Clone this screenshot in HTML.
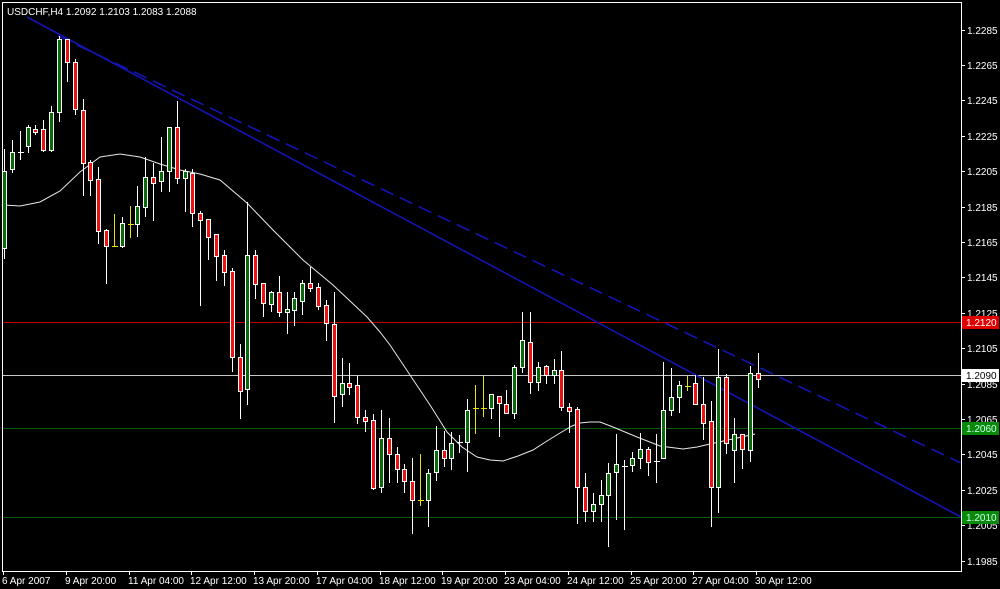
<!DOCTYPE html>
<html><head><meta charset="utf-8"><style>
html,body{margin:0;padding:0;background:#000;width:1000px;height:589px;overflow:hidden}
svg{display:block}
text{font-family:"Liberation Sans",sans-serif;font-size:10px;fill:#fff}
</style></head><body>
<svg width="1000" height="589" viewBox="0 0 1000 589" xmlns="http://www.w3.org/2000/svg">
<rect width="1000" height="589" fill="#000"/>
<!-- horizontal lines -->
<line x1="3" y1="322.5" x2="961" y2="322.5" stroke="#c00000" stroke-width="1"/>
<line x1="3" y1="375.5" x2="961" y2="375.5" stroke="#c8c8c8" stroke-width="1"/>
<line x1="3" y1="428.5" x2="961" y2="428.5" stroke="#0a5a0a" stroke-width="1"/>
<line x1="3" y1="517.5" x2="961" y2="517.5" stroke="#0a5a0a" stroke-width="1"/>
<!-- trend lines -->
<line x1="27" y1="17" x2="961" y2="517" stroke="#1414b4" stroke-width="1.6"/>
<line x1="58" y1="36" x2="961" y2="463" stroke="#1414b4" stroke-width="1.6" stroke-dasharray="14,7"/>
<!-- MA -->
<polyline fill="none" stroke="#e8e8e8" stroke-width="1" points="3,205 20,206 40,202 60,191 80,172 100,157 120,154 140,157 160,164 180,170 200,174 220,180 247,203 273,230 303,260 333,285 367,317 380,332 390,345 410,375 430,405 447,432 462,447 477,457 490,460 503,461 518,456 533,450 547,441 560,433 572,426 580,423 590,422 600,422 613,427 625,432 637,437 660,446 683,449 697,447 710,444 737,438 755,434"/>
<g shape-rendering="crispEdges" stroke-width="1">
<g stroke="#fff">
<line x1="4.5" y1="149" x2="4.5" y2="259"/><line x1="12.5" y1="140" x2="12.5" y2="173"/><line x1="20.5" y1="131" x2="20.5" y2="160"/><line x1="28.5" y1="125" x2="28.5" y2="153"/><line x1="35.5" y1="125" x2="35.5" y2="135"/><line x1="43.5" y1="120" x2="43.5" y2="152"/><line x1="51.5" y1="106" x2="51.5" y2="152"/><line x1="59.5" y1="36" x2="59.5" y2="122"/><line x1="67.5" y1="39" x2="67.5" y2="82"/><line x1="75.5" y1="59" x2="75.5" y2="115"/><line x1="83.5" y1="99" x2="83.5" y2="196"/><line x1="90.5" y1="160" x2="90.5" y2="196"/><line x1="98.5" y1="167" x2="98.5" y2="244"/><line x1="106.5" y1="229" x2="106.5" y2="284"/><line x1="122.5" y1="217" x2="122.5" y2="248"/><line x1="137.5" y1="186" x2="137.5" y2="237"/><line x1="145.5" y1="157" x2="145.5" y2="217"/><line x1="153.5" y1="163" x2="153.5" y2="221"/><line x1="161.5" y1="137" x2="161.5" y2="192"/><line x1="169.5" y1="127" x2="169.5" y2="192"/><line x1="177.5" y1="101" x2="177.5" y2="184"/><line x1="185.5" y1="169" x2="185.5" y2="212"/><line x1="192.5" y1="169" x2="192.5" y2="227"/><line x1="200.5" y1="211" x2="200.5" y2="306"/><line x1="208.5" y1="219" x2="208.5" y2="260"/><line x1="216.5" y1="234" x2="216.5" y2="281"/><line x1="224.5" y1="250" x2="224.5" y2="286"/><line x1="232.5" y1="268" x2="232.5" y2="372"/><line x1="240.5" y1="344" x2="240.5" y2="419"/><line x1="247.5" y1="202" x2="247.5" y2="405"/><line x1="255.5" y1="250" x2="255.5" y2="299"/><line x1="263.5" y1="283" x2="263.5" y2="317"/><line x1="271.5" y1="291" x2="271.5" y2="312"/><line x1="279.5" y1="276" x2="279.5" y2="317"/><line x1="287.5" y1="292" x2="287.5" y2="334"/><line x1="294.5" y1="292" x2="294.5" y2="326"/><line x1="302.5" y1="280" x2="302.5" y2="315"/><line x1="310.5" y1="267" x2="310.5" y2="292"/><line x1="318.5" y1="283" x2="318.5" y2="310"/><line x1="326.5" y1="300" x2="326.5" y2="341"/><line x1="334.5" y1="292" x2="334.5" y2="423"/><line x1="342.5" y1="358" x2="342.5" y2="407"/><line x1="349.5" y1="363" x2="349.5" y2="395"/><line x1="357.5" y1="376" x2="357.5" y2="424"/><line x1="365.5" y1="410" x2="365.5" y2="432"/><line x1="373.5" y1="414" x2="373.5" y2="490"/><line x1="381.5" y1="410" x2="381.5" y2="493"/><line x1="389.5" y1="418" x2="389.5" y2="483"/><line x1="397.5" y1="447" x2="397.5" y2="483"/><line x1="404.5" y1="464" x2="404.5" y2="493"/><line x1="412.5" y1="458" x2="412.5" y2="534"/><line x1="428.5" y1="469" x2="428.5" y2="527"/><line x1="436.5" y1="426" x2="436.5" y2="481"/><line x1="444.5" y1="431" x2="444.5" y2="467"/><line x1="451.5" y1="432" x2="451.5" y2="470"/><line x1="459.5" y1="435" x2="459.5" y2="453"/><line x1="467.5" y1="399" x2="467.5" y2="472"/><line x1="491.5" y1="394" x2="491.5" y2="419"/><line x1="499.5" y1="396" x2="499.5" y2="437"/><line x1="506.5" y1="390" x2="506.5" y2="413"/><line x1="514.5" y1="365" x2="514.5" y2="419"/><line x1="522.5" y1="312" x2="522.5" y2="373"/><line x1="530.5" y1="312" x2="530.5" y2="394"/><line x1="538.5" y1="362" x2="538.5" y2="391"/><line x1="546.5" y1="365" x2="546.5" y2="384"/><line x1="554.5" y1="359" x2="554.5" y2="384"/><line x1="561.5" y1="351" x2="561.5" y2="411"/><line x1="569.5" y1="403" x2="569.5" y2="433"/><line x1="577.5" y1="407" x2="577.5" y2="524"/><line x1="585.5" y1="473" x2="585.5" y2="522"/><line x1="593.5" y1="493" x2="593.5" y2="522"/><line x1="601.5" y1="480" x2="601.5" y2="522"/><line x1="608.5" y1="463" x2="608.5" y2="547"/><line x1="616.5" y1="434" x2="616.5" y2="520"/><line x1="624.5" y1="460" x2="624.5" y2="530"/><line x1="632.5" y1="452" x2="632.5" y2="472"/><line x1="640.5" y1="433" x2="640.5" y2="469"/><line x1="648.5" y1="447" x2="648.5" y2="476"/><line x1="656.5" y1="434" x2="656.5" y2="483"/><line x1="663.5" y1="362" x2="663.5" y2="458"/><line x1="671.5" y1="368" x2="671.5" y2="416"/><line x1="679.5" y1="381" x2="679.5" y2="413"/><line x1="695.5" y1="375" x2="695.5" y2="404"/><line x1="703.5" y1="377" x2="703.5" y2="440"/><line x1="711.5" y1="401" x2="711.5" y2="527"/><line x1="718.5" y1="349" x2="718.5" y2="513"/><line x1="726.5" y1="374" x2="726.5" y2="454"/><line x1="734.5" y1="418" x2="734.5" y2="483"/><line x1="742.5" y1="434" x2="742.5" y2="469"/><line x1="750.5" y1="366" x2="750.5" y2="462"/><line x1="758.5" y1="353" x2="758.5" y2="388"/>
</g>
<g stroke="#e6e600">
<line x1="114.5" y1="214" x2="114.5" y2="246"/><line x1="130.5" y1="206" x2="130.5" y2="238"/><line x1="420.5" y1="454" x2="420.5" y2="506"/><line x1="475.5" y1="385" x2="475.5" y2="434"/><line x1="483.5" y1="376" x2="483.5" y2="417"/><line x1="687.5" y1="376" x2="687.5" y2="391"/>
<line x1="112" y1="246.5" x2="118" y2="246.5"/><line x1="128" y1="224.5" x2="134" y2="224.5"/><line x1="418" y1="500.5" x2="424" y2="500.5"/><line x1="473" y1="408.5" x2="479" y2="408.5"/><line x1="481" y1="408.5" x2="487" y2="408.5"/><line x1="685" y1="386.5" x2="691" y2="386.5"/>
</g>
<g stroke="#fff">
<line x1="18" y1="152.5" x2="24" y2="152.5"/><line x1="457" y1="442.5" x2="463" y2="442.5"/><line x1="622" y1="466.5" x2="628" y2="466.5"/><line x1="654" y1="461.5" x2="660" y2="461.5"/>
</g>
<g stroke="#fff" fill="#0a6a0a">
<rect x="2.5" y="171.5" width="4" height="77"/><rect x="10.5" y="152.5" width="4" height="17"/><rect x="26.5" y="127.5" width="4" height="19"/><rect x="49.5" y="112.5" width="4" height="38"/><rect x="57.5" y="39.5" width="4" height="73"/><rect x="120.5" y="223.5" width="4" height="23"/><rect x="135.5" y="206.5" width="4" height="18"/><rect x="143.5" y="177.5" width="4" height="30"/><rect x="159.5" y="171.5" width="4" height="10"/><rect x="167.5" y="127.5" width="4" height="44"/><rect x="183.5" y="171.5" width="4" height="7"/><rect x="245.5" y="255.5" width="4" height="134"/><rect x="269.5" y="292.5" width="4" height="12"/><rect x="285.5" y="309.5" width="4" height="3"/><rect x="292.5" y="298.5" width="4" height="12"/><rect x="300.5" y="283.5" width="4" height="18"/><rect x="340.5" y="383.5" width="4" height="11"/><rect x="379.5" y="438.5" width="4" height="49"/><rect x="426.5" y="473.5" width="4" height="27"/><rect x="434.5" y="450.5" width="4" height="22"/><rect x="449.5" y="443.5" width="4" height="15"/><rect x="465.5" y="410.5" width="4" height="32"/><rect x="489.5" y="394.5" width="4" height="14"/><rect x="512.5" y="367.5" width="4" height="46"/><rect x="520.5" y="340.5" width="4" height="27"/><rect x="536.5" y="367.5" width="4" height="15"/><rect x="552.5" y="370.5" width="4" height="5"/><rect x="591.5" y="504.5" width="4" height="7"/><rect x="599.5" y="495.5" width="4" height="9"/><rect x="606.5" y="473.5" width="4" height="22"/><rect x="614.5" y="464.5" width="4" height="8"/><rect x="630.5" y="458.5" width="4" height="7"/><rect x="638.5" y="449.5" width="4" height="9"/><rect x="661.5" y="410.5" width="4" height="48"/><rect x="669.5" y="397.5" width="4" height="13"/><rect x="677.5" y="385.5" width="4" height="12"/><rect x="716.5" y="377.5" width="4" height="110"/><rect x="732.5" y="434.5" width="4" height="16"/><rect x="748.5" y="373.5" width="4" height="77"/>
</g>
<g stroke="#fff" fill="#ee1111">
<rect x="33.5" y="129.5" width="4" height="3"/><rect x="41.5" y="129.5" width="4" height="21"/><rect x="65.5" y="39.5" width="4" height="23"/><rect x="73.5" y="62.5" width="4" height="47"/><rect x="81.5" y="110.5" width="4" height="53"/><rect x="88.5" y="162.5" width="4" height="18"/><rect x="96.5" y="179.5" width="4" height="52"/><rect x="104.5" y="230.5" width="4" height="16"/><rect x="151.5" y="177.5" width="4" height="6"/><rect x="175.5" y="127.5" width="4" height="51"/><rect x="190.5" y="173.5" width="4" height="40"/><rect x="198.5" y="213.5" width="4" height="7"/><rect x="206.5" y="219.5" width="4" height="18"/><rect x="214.5" y="234.5" width="4" height="22"/><rect x="222.5" y="255.5" width="4" height="17"/><rect x="230.5" y="271.5" width="4" height="86"/><rect x="238.5" y="357.5" width="4" height="34"/><rect x="253.5" y="255.5" width="4" height="29"/><rect x="261.5" y="283.5" width="4" height="20"/><rect x="277.5" y="292.5" width="4" height="20"/><rect x="308.5" y="283.5" width="4" height="5"/><rect x="316.5" y="287.5" width="4" height="19"/><rect x="324.5" y="305.5" width="4" height="18"/><rect x="332.5" y="324.5" width="4" height="72"/><rect x="347.5" y="383.5" width="4" height="4"/><rect x="355.5" y="385.5" width="4" height="32"/><rect x="363.5" y="417.5" width="4" height="4"/><rect x="371.5" y="420.5" width="4" height="68"/><rect x="387.5" y="438.5" width="4" height="16"/><rect x="395.5" y="454.5" width="4" height="15"/><rect x="402.5" y="469.5" width="4" height="12"/><rect x="410.5" y="481.5" width="4" height="19"/><rect x="442.5" y="450.5" width="4" height="8"/><rect x="497.5" y="396.5" width="4" height="7"/><rect x="504.5" y="404.5" width="4" height="9"/><rect x="528.5" y="342.5" width="4" height="40"/><rect x="544.5" y="366.5" width="4" height="9"/><rect x="559.5" y="370.5" width="4" height="37"/><rect x="567.5" y="407.5" width="4" height="4"/><rect x="575.5" y="409.5" width="4" height="78"/><rect x="583.5" y="487.5" width="4" height="24"/><rect x="646.5" y="449.5" width="4" height="13"/><rect x="693.5" y="383.5" width="4" height="21"/><rect x="701.5" y="404.5" width="4" height="19"/><rect x="709.5" y="421.5" width="4" height="66"/><rect x="724.5" y="377.5" width="4" height="66"/><rect x="740.5" y="434.5" width="4" height="15"/><rect x="756.5" y="373.5" width="4" height="6"/>
</g>
</g>
<!-- frame -->
<rect x="2.5" y="2.5" width="959" height="569" fill="none" stroke="#fff" stroke-width="1"/>
<text x="7" y="15">USDCHF,H4  1.2092 1.2103 1.2083 1.2088</text>
<!-- right axis ticks & labels -->
<g stroke="#fff">
<line x1="962" y1="30.5" x2="965" y2="30.5"/><line x1="962" y1="65.5" x2="965" y2="65.5"/><line x1="962" y1="100.5" x2="965" y2="100.5"/><line x1="962" y1="136.5" x2="965" y2="136.5"/><line x1="962" y1="171.5" x2="965" y2="171.5"/><line x1="962" y1="207.5" x2="965" y2="207.5"/><line x1="962" y1="242.5" x2="965" y2="242.5"/><line x1="962" y1="277.5" x2="965" y2="277.5"/><line x1="962" y1="313.5" x2="965" y2="313.5"/><line x1="962" y1="348.5" x2="965" y2="348.5"/><line x1="962" y1="384.5" x2="965" y2="384.5"/><line x1="962" y1="419.5" x2="965" y2="419.5"/><line x1="962" y1="454.5" x2="965" y2="454.5"/><line x1="962" y1="490.5" x2="965" y2="490.5"/><line x1="962" y1="525.5" x2="965" y2="525.5"/><line x1="962" y1="561.5" x2="965" y2="561.5"/>
</g>
<text x="967" y="34">1.2285</text><text x="967" y="69">1.2265</text><text x="967" y="104">1.2245</text><text x="967" y="140">1.2225</text><text x="967" y="175">1.2205</text><text x="967" y="211">1.2185</text><text x="967" y="246">1.2165</text><text x="967" y="281">1.2145</text><text x="967" y="317">1.2125</text><text x="967" y="352">1.2105</text><text x="967" y="388">1.2085</text><text x="967" y="423">1.2065</text><text x="967" y="458">1.2045</text><text x="967" y="494">1.2025</text><text x="967" y="529">1.2005</text><text x="967" y="565">1.1985</text>
<rect x="962" y="316" width="37" height="13" fill="#e00000"/><text x="966" y="326" style="fill:#fff">1.2120</text>
<rect x="962" y="369" width="37" height="13" fill="#fff"/><text x="966" y="379" style="fill:#000">1.2090</text>
<rect x="962" y="422" width="37" height="13" fill="#0a8a0a"/><text x="966" y="432" style="fill:#cfe">1.2060</text>
<rect x="962" y="511" width="37" height="13" fill="#0a8a0a"/><text x="966" y="521" style="fill:#cfe">1.2010</text>
<!-- bottom axis -->
<g stroke="#fff">
<line x1="3.5" y1="571" x2="3.5" y2="575"/><line x1="66.5" y1="571" x2="66.5" y2="575"/><line x1="129.5" y1="571" x2="129.5" y2="575"/><line x1="191.5" y1="571" x2="191.5" y2="575"/><line x1="254.5" y1="571" x2="254.5" y2="575"/><line x1="317.5" y1="571" x2="317.5" y2="575"/><line x1="380.5" y1="571" x2="380.5" y2="575"/><line x1="442.5" y1="571" x2="442.5" y2="575"/><line x1="505.5" y1="571" x2="505.5" y2="575"/><line x1="568.5" y1="571" x2="568.5" y2="575"/><line x1="631.5" y1="571" x2="631.5" y2="575"/><line x1="693.5" y1="571" x2="693.5" y2="575"/><line x1="756.5" y1="571" x2="756.5" y2="575"/>
</g>
<text x="2" y="584">6 Apr 2007</text><text x="65" y="584">9 Apr 20:00</text><text x="128" y="584">11 Apr 04:00</text><text x="190" y="584">12 Apr 12:00</text><text x="253" y="584">13 Apr 20:00</text><text x="316" y="584">17 Apr 04:00</text><text x="379" y="584">18 Apr 12:00</text><text x="441" y="584">19 Apr 20:00</text><text x="504" y="584">23 Apr 04:00</text><text x="567" y="584">24 Apr 12:00</text><text x="630" y="584">25 Apr 20:00</text><text x="692" y="584">27 Apr 04:00</text><text x="755" y="584">30 Apr 12:00</text>
</svg>
</body></html>
